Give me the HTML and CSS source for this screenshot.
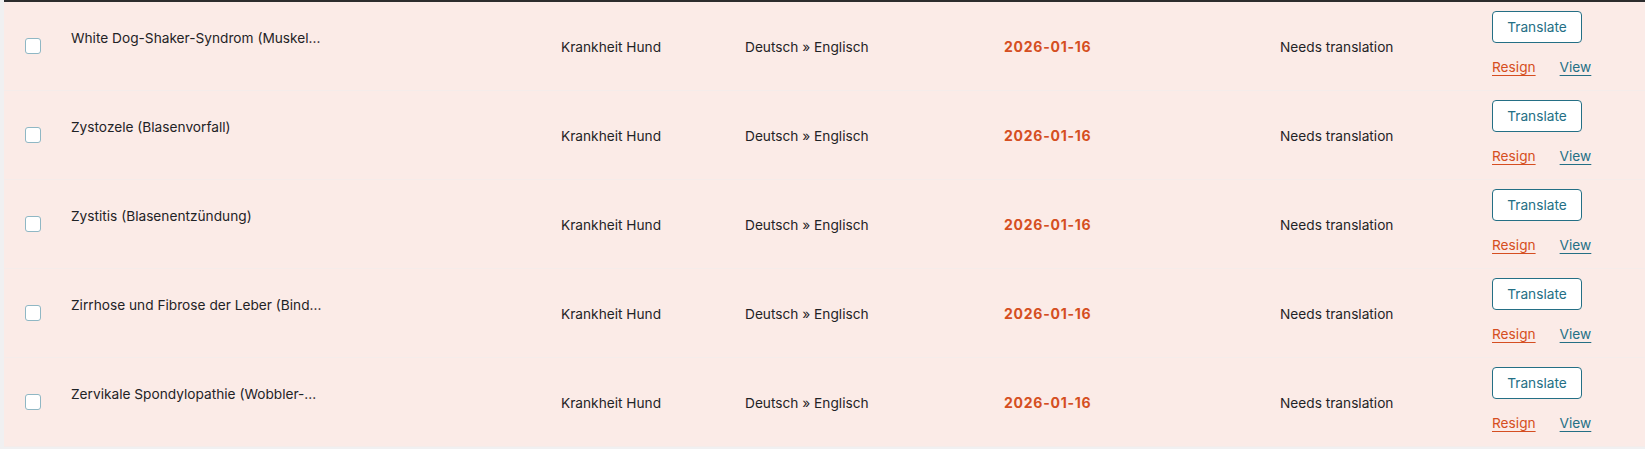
FILE: index.html
```html
<!DOCTYPE html>
<html lang="de">
<head>
<meta charset="utf-8">
<title>Translation jobs</title>
<link rel="stylesheet" href="styles.css">
</head>
<body>
<div class="jobs">
  <div class="row">
    <div class="cell cb"><span class="box"></span></div>
    <div class="cell title">White Dog-Shaker-Syndrom (Muskel...</div>
    <div class="cell">Krankheit Hund</div>
    <div class="cell">Deutsch » Englisch</div>
    <div class="cell date">2026-01-16</div>
    <div class="cell">Needs translation</div>
    <div class="cell actions"><button class="btn">Translate</button><div class="links"><a class="resign" href="#">Resign</a><a class="view" href="#">View</a></div></div>
  </div>
  <div class="row">
    <div class="cell cb"><span class="box"></span></div>
    <div class="cell title">Zystozele (Blasenvorfall)</div>
    <div class="cell">Krankheit Hund</div>
    <div class="cell">Deutsch » Englisch</div>
    <div class="cell date">2026-01-16</div>
    <div class="cell">Needs translation</div>
    <div class="cell actions"><button class="btn">Translate</button><div class="links"><a class="resign" href="#">Resign</a><a class="view" href="#">View</a></div></div>
  </div>
  <div class="row">
    <div class="cell cb"><span class="box"></span></div>
    <div class="cell title">Zystitis (Blasenentzündung)</div>
    <div class="cell">Krankheit Hund</div>
    <div class="cell">Deutsch » Englisch</div>
    <div class="cell date">2026-01-16</div>
    <div class="cell">Needs translation</div>
    <div class="cell actions"><button class="btn">Translate</button><div class="links"><a class="resign" href="#">Resign</a><a class="view" href="#">View</a></div></div>
  </div>
  <div class="row">
    <div class="cell cb"><span class="box"></span></div>
    <div class="cell title">Zirrhose und Fibrose der Leber (Bind...</div>
    <div class="cell">Krankheit Hund</div>
    <div class="cell">Deutsch » Englisch</div>
    <div class="cell date">2026-01-16</div>
    <div class="cell">Needs translation</div>
    <div class="cell actions"><button class="btn">Translate</button><div class="links"><a class="resign" href="#">Resign</a><a class="view" href="#">View</a></div></div>
  </div>
  <div class="row">
    <div class="cell cb"><span class="box"></span></div>
    <div class="cell title">Zervikale Spondylopathie (Wobbler-...</div>
    <div class="cell">Krankheit Hund</div>
    <div class="cell">Deutsch » Englisch</div>
    <div class="cell date">2026-01-16</div>
    <div class="cell">Needs translation</div>
    <div class="cell actions"><button class="btn">Translate</button><div class="links"><a class="resign" href="#">Resign</a><a class="view" href="#">View</a></div></div>
  </div>
</div>
</body>
</html>
```
FILE: styles.css
```css
html, body {
  margin: 0;
  padding: 0;
  background: #f0f0f1;
}
body {
  font-family: Inter, "Noto Sans", sans-serif;
  font-size: 13.7px;
  color: #1f2326;
  height: 449px;
  overflow: hidden;
}
.jobs {
  margin-left: 4px;
  border-top: 2px solid #2c2c2d;
  background: #fbebe7;
}
.row {
  display: grid;
  grid-template-columns: 67px 490px 184px 259px 276px 212px 1fr;
  height: 88px;
  border-bottom: 1px solid #f5ecea;
  align-items: center;
}
.cell {
  line-height: 20px;
  padding-top: 2px;
}
.cb {
  padding-top: 0;
  padding-left: 21px;
}
.box {
  display: block;
  width: 14px;
  height: 14px;
  border: 1px solid #8fb7c4;
  border-radius: 3px;
  background: #fff;
}
.title {
  align-self: start;
  padding-top: 26px;
}
.date {
  color: #d54e21;
  font-weight: 700;
  font-size: 14px;
  letter-spacing: 0.75px;
}
.actions {
  align-self: start;
  padding-top: 9px;
}
.btn {
  font-family: inherit;
  font-size: 13.7px;
  color: #246f85;
  background: #fff;
  border: 1px solid #246f85;
  border-radius: 4px;
  height: 32px;
  width: 90px;
  padding: 0;
  cursor: pointer;
}
.links {
  display: flex;
  gap: 24px;
  margin-top: 14px;
  font-size: 13.7px;
}
.links a {
  text-decoration: underline;
  text-underline-offset: 3px;
}
.resign {
  color: #d54e21;
}
.view {
  color: #246f85;
}
```
